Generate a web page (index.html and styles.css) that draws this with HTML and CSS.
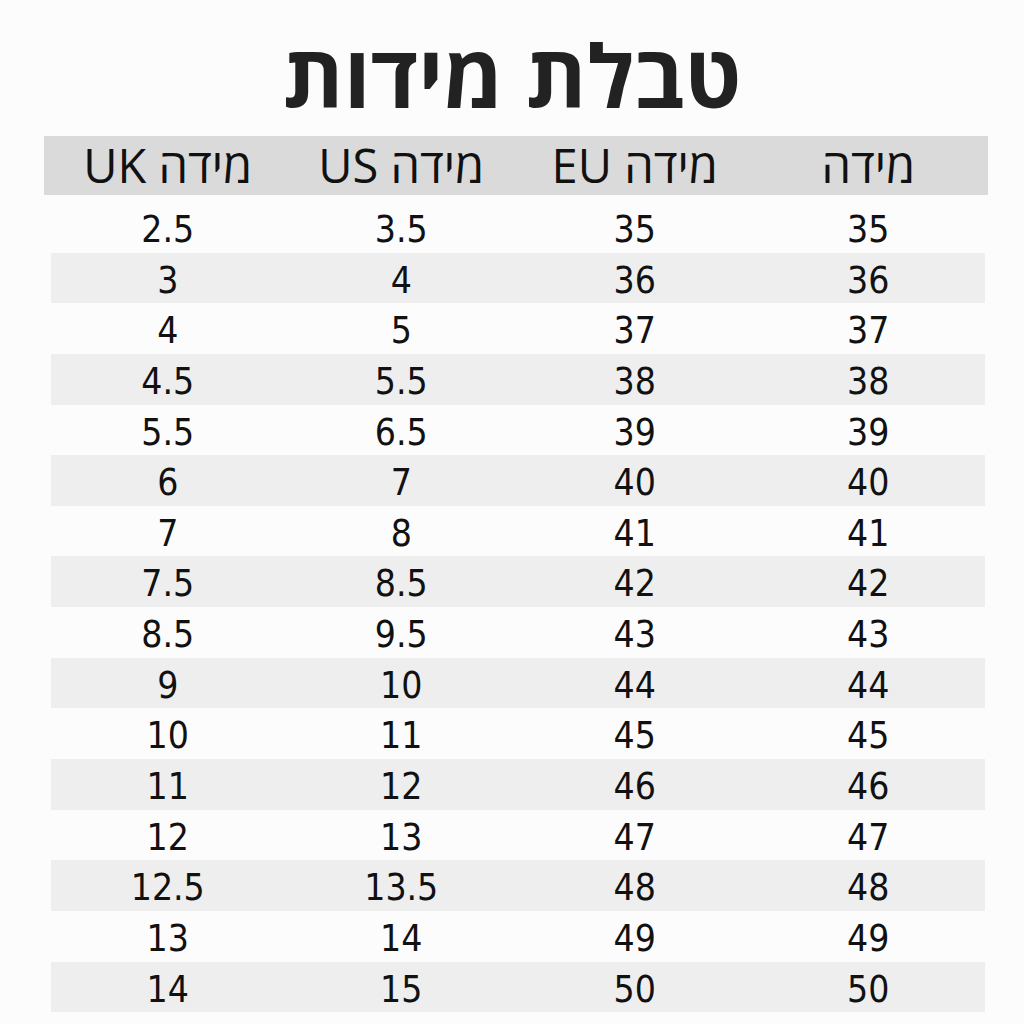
FILE: index.html
```html
<!DOCTYPE html>
<html lang="he" dir="rtl">
<head>
<meta charset="utf-8">
<title>טבלת מידות</title>
<link rel="stylesheet" href="styles.css">
</head>
<body>
<main class="page">
  <h1 class="title">טבלת מידות</h1>
  <div class="table">
    <div class="head">
      <div class="cell">מידה</div>
      <div class="cell">מידה EU</div>
      <div class="cell">מידה US</div>
      <div class="cell">מידה UK</div>
    </div>
    <div class="rows">
      <div class="row"><div class="cell">35</div><div class="cell">35</div><div class="cell">3.5</div><div class="cell">2.5</div></div>
      <div class="row"><div class="cell">36</div><div class="cell">36</div><div class="cell">4</div><div class="cell">3</div></div>
      <div class="row"><div class="cell">37</div><div class="cell">37</div><div class="cell">5</div><div class="cell">4</div></div>
      <div class="row"><div class="cell">38</div><div class="cell">38</div><div class="cell">5.5</div><div class="cell">4.5</div></div>
      <div class="row"><div class="cell">39</div><div class="cell">39</div><div class="cell">6.5</div><div class="cell">5.5</div></div>
      <div class="row"><div class="cell">40</div><div class="cell">40</div><div class="cell">7</div><div class="cell">6</div></div>
      <div class="row"><div class="cell">41</div><div class="cell">41</div><div class="cell">8</div><div class="cell">7</div></div>
      <div class="row"><div class="cell">42</div><div class="cell">42</div><div class="cell">8.5</div><div class="cell">7.5</div></div>
      <div class="row"><div class="cell">43</div><div class="cell">43</div><div class="cell">9.5</div><div class="cell">8.5</div></div>
      <div class="row"><div class="cell">44</div><div class="cell">44</div><div class="cell">10</div><div class="cell">9</div></div>
      <div class="row"><div class="cell">45</div><div class="cell">45</div><div class="cell">11</div><div class="cell">10</div></div>
      <div class="row"><div class="cell">46</div><div class="cell">46</div><div class="cell">12</div><div class="cell">11</div></div>
      <div class="row"><div class="cell">47</div><div class="cell">47</div><div class="cell">13</div><div class="cell">12</div></div>
      <div class="row"><div class="cell">48</div><div class="cell">48</div><div class="cell">13.5</div><div class="cell">12.5</div></div>
      <div class="row"><div class="cell">49</div><div class="cell">49</div><div class="cell">14</div><div class="cell">13</div></div>
      <div class="row"><div class="cell">50</div><div class="cell">50</div><div class="cell">15</div><div class="cell">14</div></div>
    </div>
  </div>
</main>
</body>
</html>
```
FILE: styles.css
```css
* { box-sizing: border-box; }
html, body {
  margin: 0;
  padding: 0;
  background: #fcfcfc;
}
body {
  font-family: "Open Sans", "Noto Sans", "DejaVu Sans", sans-serif;
  color: #111;
  width: 1024px;
  height: 1024px;
  overflow: hidden;
}
.page {
  display: flex;
  flex-direction: column;
  padding-top: 24px;
}
.title {
  margin: 0;
  align-self: center;
  font-size: 87px;
  font-weight: 700;
  line-height: 100px;
  color: #222;
  height: 112px;
}
.table {
  margin: 0 36px 0 44px;
  display: flex;
  flex-direction: column;
}
.head {
  height: 59px;
  background: #dadada;
  display: grid;
  grid-template-columns: repeat(4, 1fr);
  align-items: center;
  padding: 0 3px 0 7px;
}
.head .cell {
  text-align: center;
  font-size: 47px;
  line-height: 59px;
  color: #111;
}
.rows {
  margin: 7px 3px 0 7px;
  display: flex;
  flex-direction: column;
}
.row {
  height: 50.65px;
  display: grid;
  grid-template-columns: repeat(4, 1fr);
  align-items: center;
}
.row:nth-child(even) {
  background: #eeeeee;
}
.row .cell {
  text-align: center;
  font-family: "DejaVu Sans Condensed", "DejaVu Sans", sans-serif;
  font-size: 37px;
  line-height: 50px;
  padding-top: 3px;
  color: #111;
}
```
